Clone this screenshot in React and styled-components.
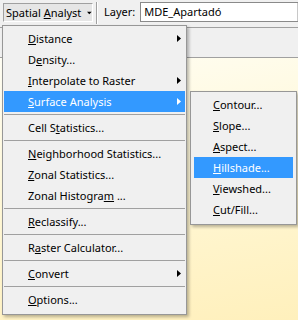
import React from 'react';
import styled, { createGlobalStyle } from 'styled-components';

const GlobalStyle = createGlobalStyle`
  *, *::before, *::after { box-sizing: border-box; }
  html, body { margin: 0; padding: 0; background: #ffffff; }
  body { font-family: "Noto Sans", "Open Sans", sans-serif; }
`;

const Screen = styled.div`
  position: relative;
  width: 298px;
  height: 320px;
  overflow: hidden;
  display: flex;
  flex-direction: column;
  font-family: "Noto Sans", "Open Sans", sans-serif;
  font-size: 11px;
  color: #000;
`;

const Toolbar = styled.div`
  flex: none;
  height: 28px;
  background: #f0f0f0;
  border-bottom: 1px solid #a0a0a0;
  display: flex;
  align-items: flex-start;
  padding: 2px 0 0 3px;
`;

const ToolButton = styled.div`
  margin-top: 1px;
  width: 90px;
  height: 19px;
  display: flex;
  align-items: center;
  gap: 6px;
  padding-left: 2px;
  background: ${p => (p.$pressed ? '#e6e6e6' : 'transparent')};
  border: 1px solid;
  border-color: ${p => (p.$pressed ? '#a0a0a0 #ffffff #ffffff #a0a0a0' : 'transparent')};
  white-space: nowrap;
`;

const ToolSeparator = styled.div`
  width: 2px;
  height: 22px;
  margin-left: 3px;
  border-left: 1px solid #a0a0a0;
  border-right: 1px solid #ffffff;
`;

const FieldLabel = styled.div`
  margin-left: 6px;
  height: 20px;
  line-height: 20px;
  white-space: nowrap;
`;

const Combo = styled.div`
  margin-left: 5px;
  width: 175px;
  height: 20px;
  flex: none;
  display: flex;
  background: #ffffff;
  border: 1px solid #8a8a8a;
`;

const ComboText = styled.div`
  flex: 1;
  padding-left: 3px;
  line-height: 18px;
  white-space: nowrap;
`;

const ComboButton = styled.div`
  width: 17px;
  background: #ececec;
  border-left: 1px solid #c8c8c8;
`;

const SubBar = styled.div`
  flex: none;
  height: 30px;
  background: #f0f0f0;
  border-bottom: 1px solid #a0a0a0;
`;

const MapArea = styled.div`
  flex: 1;
  background: linear-gradient(170deg, #fffef4 0%, #fff8d8 45%, #fff0bc 100%);
`;

const Menu = styled.div`
  position: absolute;
  left: ${p => p.$left}px;
  top: ${p => p.$top}px;
  width: ${p => p.$width}px;
  background: #f0f0f0;
  border: 1px solid #979797;
  padding: 2px ${p => p.$padX}px 4px;
  box-shadow: 2px 2px 3px rgba(0, 0, 0, 0.28);
`;

const Item = styled.div`
  height: 21px;
  display: flex;
  align-items: center;
  padding-left: ${p => p.$indent}px;
  padding-right: 4px;
  white-space: nowrap;
  color: ${p => (p.$active ? '#ffffff' : '#000000')};
  background: ${p => (p.$active ? '#3399ff' : 'transparent')};
`;

const ItemLabel = styled.span`
  flex: 1;
`;

const Key = styled.span`
  text-decoration: underline;
  text-underline-offset: 1px;
`;

const Separator = styled.div`
  height: 5px;
  display: flex;
  align-items: center;
  &::before {
    content: '';
    flex: 1;
    height: 1px;
    background: #a0a0a0;
  }
`;

const Arrow = () => (
  <svg width="4" height="7" viewBox="0 0 4 7" style={{ display: 'block' }}>
    <polygon points="0,0 4,3.5 0,7" fill="currentColor" />
  </svg>
);

const DownArrow = () => (
  <svg width="7" height="4" viewBox="0 0 7 4" style={{ display: 'block' }}>
    <polygon points="0,0 7,0 3.5,4" fill="#000" />
  </svg>
);

const mainItems = [
  { pre: '', key: 'D', post: 'istance', sub: true },
  { pre: 'D', key: 'e', post: 'nsity...' },
  { pre: '', key: 'I', post: 'nterpolate to Raster', sub: true },
  { pre: '', key: 'S', post: 'urface Analysis', sub: true, active: true },
  { sep: true },
  { pre: 'Cell S', key: 't', post: 'atistics...' },
  { sep: true },
  { pre: '', key: 'N', post: 'eighborhood Statistics...' },
  { pre: '', key: 'Z', post: 'onal Statistics...' },
  { pre: 'Zonal Histogra', key: 'm', post: ' ...' },
  { sep: true },
  { pre: '', key: 'R', post: 'eclassify...' },
  { sep: true },
  { pre: 'R', key: 'a', post: 'ster Calculator...' },
  { sep: true },
  { pre: '', key: 'C', post: 'onvert', sub: true },
  { sep: true },
  { pre: '', key: 'O', post: 'ptions...' },
];

const subItems = [
  { pre: '', key: 'C', post: 'ontour...' },
  { pre: '', key: 'S', post: 'lope...' },
  { pre: '', key: 'A', post: 'spect...' },
  { pre: '', key: 'H', post: 'illshade...', active: true },
  { pre: '', key: 'V', post: 'iewshed...' },
  { pre: '', key: 'C', post: 'ut/Fill...' },
];

const renderItems = (items, indent) =>
  items.map((it, i) =>
    it.sep ? (
      <Separator key={i} />
    ) : (
      <Item key={i} $active={it.active} $indent={indent}>
        <ItemLabel>
          {it.pre}
          <Key>{it.key}</Key>
          {it.post}
        </ItemLabel>
        {it.sub && <Arrow />}
      </Item>
    )
  );

export default function App() {
  return (
    <>
      <GlobalStyle />
      <Screen>
        <Toolbar>
          <ToolButton $pressed>
            <span>
              Spatial <Key>A</Key>nalyst
            </span>
            <DownArrow />
          </ToolButton>
          <ToolSeparator />
          <FieldLabel>Layer:</FieldLabel>
          <Combo>
            <ComboText>MDE_Apartadó</ComboText>
            <ComboButton />
          </Combo>
        </Toolbar>
        <SubBar />
        <MapArea />
        <Menu $left={2} $top={25} $width={185} $padX={1}>
          {renderItems(mainItems, 24)}
        </Menu>
        <Menu $left={190} $top={91} $width={107} $padX={3}>
          {renderItems(subItems, 19)}
        </Menu>
      </Screen>
    </>
  );
}
